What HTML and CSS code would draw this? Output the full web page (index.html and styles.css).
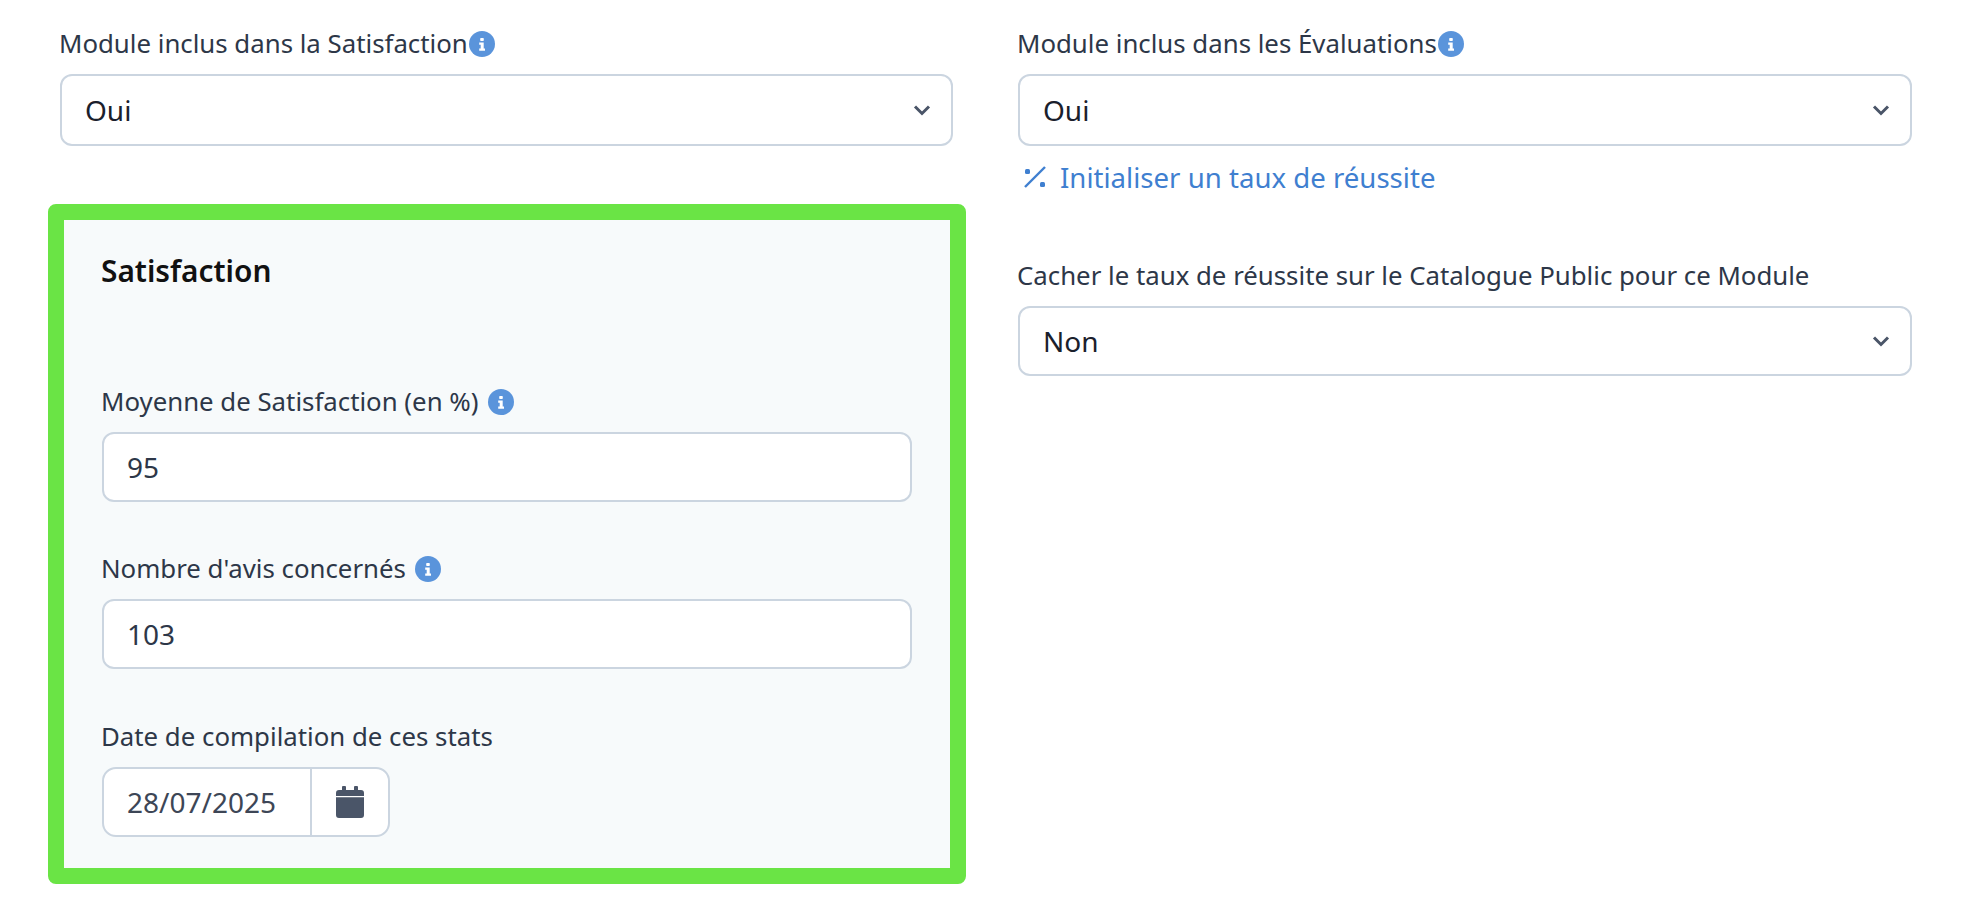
FILE: index.html
```html
<!DOCTYPE html>
<html lang="fr">
<head>
<meta charset="utf-8">
<title>Module</title>
<link rel="stylesheet" href="styles.css">
</head>
<body>
<main class="grid">
  <section class="col">
    <div class="field">
      <label class="label">Module inclus dans la Satisfaction<svg class="info" viewBox="0 0 26 26"><circle cx="13" cy="13" r="13"/><rect x="11.2" y="7" width="3.6" height="3" rx=".8"/><path d="M10.2 11.6h4.5v6h1.3v2.2h-5.8v-2.2h1.5v-3.8h-1.5z"/></svg></label>
      <div class="control select tall"><span class="value dark">Oui</span><svg class="chev" viewBox="0 0 18 12"><path d="M2 2.5l7 7 7-7"/></svg></div>
    </div>
    <div class="panel">
      <h2 class="panel-title">Satisfaction</h2>
      <div class="field stat-first">
        <label class="label">Moyenne de Satisfaction (en %)<svg class="info gap" viewBox="0 0 26 26"><circle cx="13" cy="13" r="13"/><rect x="11.2" y="7" width="3.6" height="3" rx=".8"/><path d="M10.2 11.6h4.5v6h1.3v2.2h-5.8v-2.2h1.5v-3.8h-1.5z"/></svg></label>
        <div class="control"><span class="value">95</span></div>
      </div>
      <div class="field stat">
        <label class="label">Nombre d'avis concernés<svg class="info gap" viewBox="0 0 26 26"><circle cx="13" cy="13" r="13"/><rect x="11.2" y="7" width="3.6" height="3" rx=".8"/><path d="M10.2 11.6h4.5v6h1.3v2.2h-5.8v-2.2h1.5v-3.8h-1.5z"/></svg></label>
        <div class="control"><span class="value">103</span></div>
      </div>
      <div class="field stat-date">
        <label class="label">Date de compilation de ces stats</label>
        <div class="date">
          <span class="value date-value">28/07/2025</span>
          <span class="date-btn"><svg class="cal" viewBox="0 0 28 32"><path d="M7 0h2a1 1 0 0 1 1 1v3h8V1a1 1 0 0 1 1-1h2a1 1 0 0 1 1 1v3h3a3 3 0 0 1 3 3v3H0V7a3 3 0 0 1 3-3h3V1a1 1 0 0 1 1-1zM0 11.2h28V29a3 3 0 0 1-3 3H3a3 3 0 0 1-3-3z"/></svg></span>
        </div>
      </div>
    </div>
  </section>
  <section class="col">
    <div class="field">
      <label class="label">Module inclus dans les Évaluations<svg class="info" viewBox="0 0 26 26"><circle cx="13" cy="13" r="13"/><rect x="11.2" y="7" width="3.6" height="3" rx=".8"/><path d="M10.2 11.6h4.5v6h1.3v2.2h-5.8v-2.2h1.5v-3.8h-1.5z"/></svg></label>
      <div class="control select tall"><span class="value dark">Oui</span><svg class="chev" viewBox="0 0 18 12"><path d="M2 2.5l7 7 7-7"/></svg></div>
    </div>
    <a class="link"><svg class="pct" viewBox="0 0 22 22"><path class="pct-line" d="M1 21L21 1"/><rect x="1" y="3" width="5" height="5" rx="1.5"/><rect x="16" y="16" width="5" height="5" rx="1.5"/></svg>Initialiser un taux de réussite</a>
    <div class="field hide-field">
      <label class="label">Cacher le taux de réussite sur le Catalogue Public pour ce Module</label>
      <div class="control select"><span class="value dark">Non</span><svg class="chev" viewBox="0 0 18 12"><path d="M2 2.5l7 7 7-7"/></svg></div>
    </div>
  </section>
</main>
</body>
</html>
```
FILE: styles.css
```css
* { box-sizing: border-box; }
html, body { margin: 0; padding: 0; background: #fff; }
body {
  width: 1972px;
  height: 904px;
  overflow: hidden;
  font-family: "Noto Sans", "Open Sans", sans-serif;
  font-size: 28px;
  color: #2d3748;
}
.grid {
  display: grid;
  grid-template-columns: 893px 894px;
  column-gap: 65px;
  padding: 27px 60px 0;
  align-items: start;
}
.col { display: flex; flex-direction: column; min-width: 0; }
.field { display: flex; flex-direction: column; }
.label {
  display: flex;
  align-items: center;
  height: 33px;
  margin-left: -1px;
  font-size: 25.8px;
  line-height: 33px;
  color: #2d3748;
  white-space: nowrap;
}
.info { width: 26px; height: 26px; margin-left: 1px; flex: none; fill: #5a94db; }
.info rect, .info path { fill: #fff; }
.info.gap { margin-left: 9px; }
.control {
  display: flex;
  align-items: center;
  justify-content: space-between;
  height: 70px;
  margin-top: 14px;
  padding: 0 20px 0 23px;
  background: #fff;
  border: 2px solid #cbd5e0;
  border-radius: 12px;
}
.control.tall { height: 72px; }
.value { color: #2d3748; }
.value.dark { color: #1a202c; }
.chev { width: 18px; height: 12px; fill: none; stroke: #4a5568; stroke-width: 3; }
.panel {
  margin: 58px -12px 0;
  width: 918px;
  height: 680px;
  padding: 32px 38px 0 38px;
  background: #f7fafb;
  border: 16px solid #6ae445;
  border-radius: 8px;
}
.panel-title { margin: 0 0 0 -1px; font-size: 29.8px; line-height: 38px; font-weight: 600; color: #111; }
.stat-first { margin-top: 95px; }
.stat { margin-top: 50px; }
.stat-date { margin-top: 51px; }
.date {
  display: flex;
  width: 288px;
  height: 70px;
  margin-top: 14px;
  background: #fff;
  border: 2px solid #cbd5e0;
  border-radius: 14px;
}
.date-value { flex: 1; display: flex; align-items: center; padding-left: 23px; color: #3d4656; }
.date-btn { width: 78px; flex: none; display: flex; align-items: center; justify-content: center; border-left: 2px solid #cbd5e0; }
.cal { width: 28px; height: 32px; fill: #4a5568; }
.link { display: flex; align-items: center; margin-top: 13px; height: 36px; font-size: 27.6px; color: #3f7fd0; padding-left: 6px; }
.pct { width: 22px; height: 22px; margin-right: 14px; fill: #3f7fd0; }
.pct-line { stroke: #3f7fd0; stroke-width: 2.4; fill: none; }
.hide-field { margin-top: 64px; }
```
